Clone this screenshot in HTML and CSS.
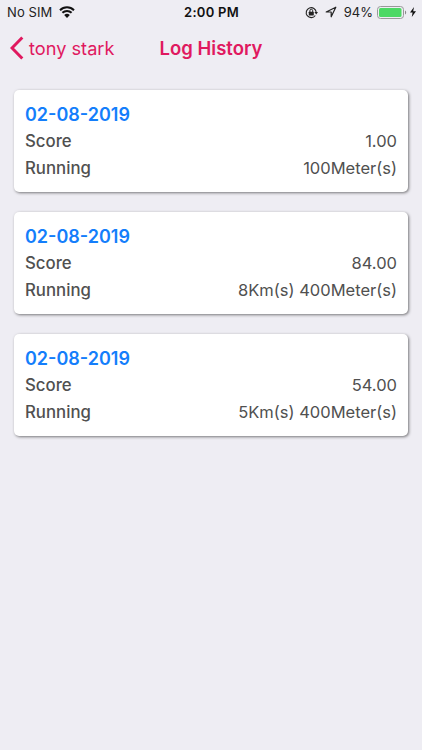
FILE: index.html
```html
<!DOCTYPE html>
<html lang="en">
<head>
  <meta charset="UTF-8" />
  <meta name="viewport" content="width=device-width, initial-scale=1.0"/>
  <title>Log History</title>
  <link rel="stylesheet" href="styles.css">
</head>
<body>

  <div class="status-bar">
    <div class="status-left">
      <span>No SIM</span>
      <svg class="wifi" viewBox="0 0 16 12">
        <path d="M1 4.2a10 10 0 0 1 14 0M3.4 6.8a6.6 6.6 0 0 1 9.2 0" fill="none" stroke="#111" stroke-width="2"/>
        <path d="M8 12L5.2 9.1a4 4 0 0 1 5.6 0z" fill="#111"/>
      </svg>
    </div>
    <div class="status-time">2:00 PM</div>
    <div class="status-right">
      <svg class="lock" viewBox="0 0 13 13">
        <path d="M10.3 9.5A5 5 0 1 1 11.2 6.3" fill="none" stroke="#222" stroke-width="1.1"/>
        <path d="M9.4 6.1h3.6L11.2 8.5z" fill="#222"/>
        <rect x="3.8" y="5.8" width="5" height="3.6" rx=".4" fill="#222"/>
        <path d="M4.9 6V4.7a1.4 1.4 0 0 1 2.8 0V6" fill="none" stroke="#222"/>
      </svg>
      <svg class="location" viewBox="0 0 12 12">
        <path d="M1.2 6L10.8 1.2L6.2 10.8V6z" fill="none" stroke="#222" stroke-width="1.2" stroke-linejoin="round"/>
      </svg>
      <span class="percent">94%</span>
      <svg class="battery" viewBox="0 0 30 13">
        <rect x=".5" y=".5" width="26" height="12" rx="3" fill="none" stroke="#999"/>
        <rect x="2" y="2" width="22.5" height="9" rx="1.5" fill="#4cd964"/>
        <path d="M28 4.5c1.6.7 1.6 3.3 0 4z" fill="#888"/>
      </svg>
      <svg class="bolt" viewBox="0 0 6 10">
        <path d="M4 0L0 5.6h2.6L1.8 10L6 4.2H3.2z" fill="#111"/>
      </svg>
    </div>
  </div>

  <div class="nav-bar">
    <a class="back">
      <svg class="chevron" viewBox="0 0 14 24">
        <path d="M12.3 1.5L2 12L12.3 22.5" fill="none" stroke="#e0195f" stroke-width="3"/>
      </svg>
      <span>tony stark</span>
    </a>
    <h1>Log History</h1>
  </div>

  <div class="log-list">
    <div class="card">
      <h2>02-08-2019</h2>
      <div class="row"><span class="label">Score</span><span class="value">1.00</span></div>
      <div class="row"><span class="label">Running</span><span class="value">100Meter(s)</span></div>
    </div>
    <div class="card">
      <h2>02-08-2019</h2>
      <div class="row"><span class="label">Score</span><span class="value">84.00</span></div>
      <div class="row"><span class="label">Running</span><span class="value">8Km(s) 400Meter(s)</span></div>
    </div>
    <div class="card">
      <h2>02-08-2019</h2>
      <div class="row"><span class="label">Score</span><span class="value">54.00</span></div>
      <div class="row"><span class="label">Running</span><span class="value">5Km(s) 400Meter(s)</span></div>
    </div>
  </div>

</body>
</html>
```

FILE: styles.css
```css
body {
  margin: 0;
  min-height: 750px;
  background: #eeedf3;
  font-family: Inter, "Liberation Sans", sans-serif;
  color: #505050;
}

.status-bar {
  display: grid;
  grid-template-columns: 1fr auto 1fr;
  align-items: center;
  height: 24px;
  padding: 0 6px 0 7px;
  font-size: 13px;
  color: #222;
}

.status-left,
.status-right {
  display: flex;
  align-items: center;
}

.status-left {
  letter-spacing: 0.1px;
}

.status-right {
  justify-content: flex-end;
}

.status-time {
  font-weight: 600;
  letter-spacing: 0.25px;
  color: #111;
}

.wifi {
  width: 16px;
  height: 12px;
  margin-left: 7px;
}

.lock {
  width: 13px;
  height: 13px;
}

.location {
  width: 12px;
  height: 12px;
  margin: 0 7px;
}

.battery {
  width: 30px;
  height: 13px;
  margin: 0 3px 0 4px;
}

.bolt {
  width: 6px;
  height: 10px;
}

.nav-bar {
  display: grid;
  grid-template-columns: 1fr auto 1fr;
  align-items: center;
  height: 47px;
  padding: 0 10px;
  color: #e0195f;
}

.back {
  display: flex;
  align-items: center;
  gap: 5px;
  font-size: 18.2px;
}

.chevron {
  width: 14px;
  height: 24px;
}

h1 {
  margin: 0;
  font-size: 18.5px;
  font-weight: 600;
}

.log-list {
  display: flex;
  flex-direction: column;
  gap: 20px;
  padding: 19px 14px;
}

.card {
  box-sizing: border-box;
  height: 102px;
  padding: 11px 11px 0;
  background: #fff;
  border-radius: 5px;
  box-shadow: 1px 1px 3px rgba(0, 0, 0, 0.5);
}

h2 {
  margin: 0;
  font-size: 18px;
  line-height: 27px;
  font-weight: 600;
  color: #147efb;
}

.row {
  display: flex;
  justify-content: space-between;
  font-size: 16.5px;
  line-height: 27px;
}

.label {
  font-size: 16.8px;
  font-weight: 450;
}
```
